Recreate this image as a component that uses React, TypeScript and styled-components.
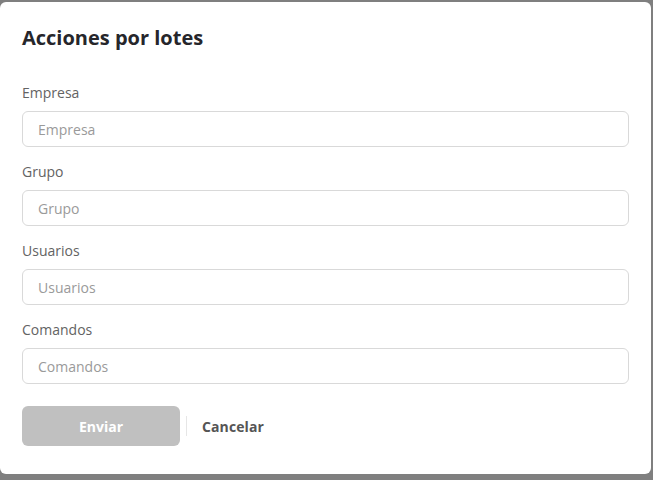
import React from 'react';
import styled, { createGlobalStyle } from 'styled-components';

const GlobalStyle = createGlobalStyle`
  html, body {
    margin: 0;
    padding: 0;
    background: #7f7f7f;
    font-family: "Open Sans", "Noto Sans", sans-serif;
  }
  * { box-sizing: border-box; }
`;

const Backdrop = styled.div`
  width: 653px;
  height: 480px;
  padding-top: 2px;
  overflow: hidden;
`;

const Modal = styled.div`
  width: 651px;
  height: 472px;
  background: #ffffff;
  border-radius: 6px;
  padding: 22px 22px 0 22px;
  display: flex;
  flex-direction: column;
`;

const Title = styled.h2`
  margin: 0 0 31px 0;
  font-size: 20px;
  line-height: 28px;
  font-weight: 700;
  color: #26262b;
`;

const Field = styled.div`
  display: flex;
  flex-direction: column;
  margin-bottom: 15px;
`;

const Label = styled.label`
  font-size: 14px;
  line-height: 20px;
  color: #636363;
  margin-bottom: 8px;
`;

const Input = styled.input`
  width: 607px;
  height: 36px;
  border: 1px solid #d9d9d9;
  border-radius: 6px;
  padding: 0 15px;
  font-family: inherit;
  font-size: 14px;
  color: #333;
  outline: none;
  &::placeholder {
    color: #9a9a9a;
  }
`;

const Actions = styled.div`
  display: flex;
  align-items: center;
  margin-top: 7px;
`;

const SubmitButton = styled.button`
  width: 158px;
  height: 40px;
  border: none;
  border-radius: 6px;
  background: #c0c0c0;
  color: #ffffff;
  font-family: inherit;
  font-size: 14px;
  font-weight: 700;
  cursor: not-allowed;
`;

const Divider = styled.span`
  width: 1px;
  height: 20px;
  background: #e6e6e6;
  margin: 0 15px 0 6px;
`;

const CancelButton = styled.button`
  border: none;
  background: transparent;
  padding: 0;
  color: #555555;
  font-family: inherit;
  font-size: 14px;
  font-weight: 700;
  letter-spacing: 0.1px;
  cursor: pointer;
`;

const fields = ['Empresa', 'Grupo', 'Usuarios', 'Comandos'];

const App = () => {
  return (
    <>
      <GlobalStyle />
      <Backdrop>
        <Modal>
          <Title>Acciones por lotes</Title>
          {fields.map((name) => (
            <Field key={name}>
              <Label>{name}</Label>
              <Input placeholder={name} />
            </Field>
          ))}
          <Actions>
            <SubmitButton disabled>Enviar</SubmitButton>
            <Divider />
            <CancelButton>Cancelar</CancelButton>
          </Actions>
        </Modal>
      </Backdrop>
    </>
  );
};

export default App;
